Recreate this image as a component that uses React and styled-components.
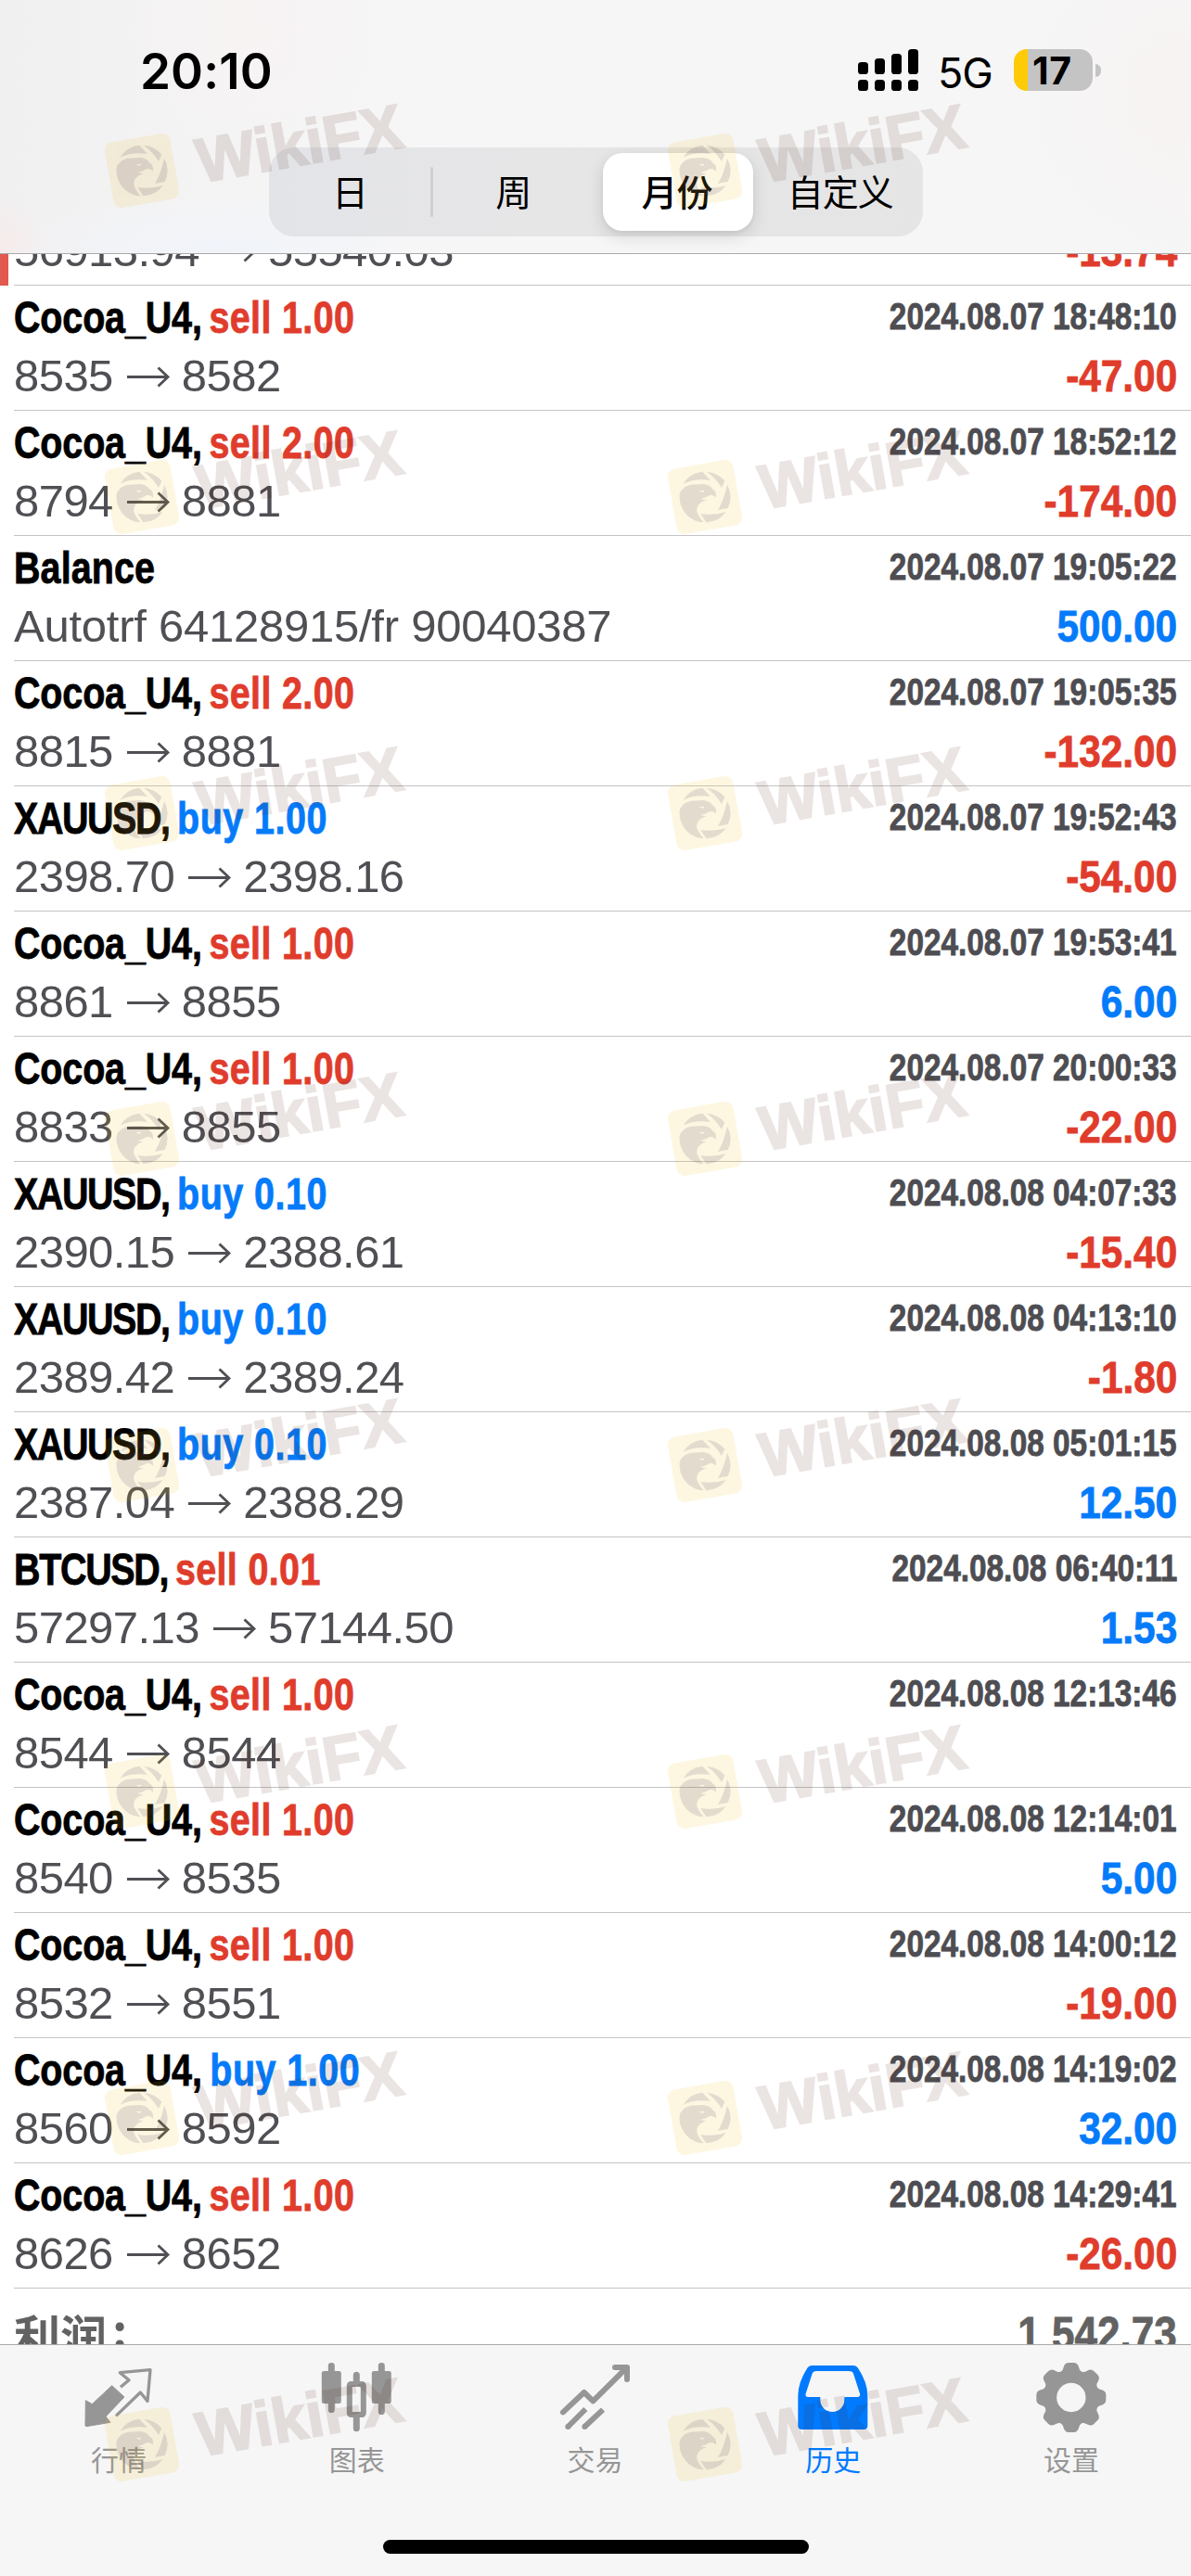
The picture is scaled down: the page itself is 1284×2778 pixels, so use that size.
import React from "react";
import styled, { createGlobalStyle } from "styled-components";

const GlobalStyle = createGlobalStyle`
  body { margin: 0; background: #fff; }
  * { box-sizing: border-box; }
`;

const RED = "#e03c2c";
const BLUE = "#057bfa";
const GREY = "#969696";

const sans = `"Liberation Sans", Arial, sans-serif`;
const cjk = `"Noto Sans CJK SC", sans-serif`;

const Screen = styled.main`
  position: relative;
  display: flex;
  flex-direction: column;
  width: 1284px;
  height: 2778px;
  overflow: hidden;
  background: #fff;
`;

const Header = styled.header`
  flex: none;
  height: 274px;
  display: flex;
  flex-direction: column;
  align-items: center;
  border-bottom: 1px solid #a9a9ab;
  background:
    radial-gradient(circle at 0px 262px, rgba(255, 228, 225, 0.4), transparent 50px),
    radial-gradient(ellipse at 230px 265px, rgba(240, 244, 251, 0.8), transparent 220px),
    radial-gradient(circle at 275px 30px, rgba(250, 243, 243, 0.7), transparent 140px),
    radial-gradient(circle at 1284px 100px, rgba(249, 240, 240, 0.6), transparent 180px),
    linear-gradient(90deg, #f1f0f1 0, #f6f6f7 400px, #f6f6f6 100%);
`;

const StatusBar = styled.div`
  width: 100%;
  height: 159px;
  padding: 53px 97px 0 151px;
  display: flex;
  justify-content: space-between;
  align-items: flex-start;
`;

const Clock = styled.div`
  font: 600 53px/48px Inter, sans-serif;
  letter-spacing: 0.1px;
  color: #000;
`;

const StatusRight = styled.div`
  display: flex;
  align-items: flex-start;
`;

const Network = styled.div`
  width: 80px;
  padding-left: 21px;
  margin-right: 23px;
  font: 400 45px/51px Inter, sans-serif;
  letter-spacing: -1px;
`;

const Battery = styled.div`
  width: 85px;
  height: 45px;
  border-radius: 14px;
  background: linear-gradient(90deg, #fecb06 15px, #c5c4c5 15px);
  padding-left: 20px;
  font: 700 41px/46px Inter, sans-serif;
  letter-spacing: 0.5px;
`;

const BatteryNub = styled.div`
  width: 6px;
  height: 14px;
  margin: 16px 0 0 3px;
  border-radius: 0 6px 6px 0;
  background: #c5c4c5;
`;

const Segmented = styled.nav`
  display: grid;
  grid-template-columns: repeat(4, 1fr);
  width: 705px;
  height: 96px;
  border-radius: 27px;
  background: linear-gradient(90deg, #e3e4e8, #e6e6e7 40%, #e5e5e6);
`;

const Segment = styled.div`
  display: flex;
  align-items: center;
  justify-content: center;
  margin: 6px 6px 6px 8px;
  padding: 0 3px 4px 0;
  border-radius: 21px;
  font: ${(p) => (p.$active ? 500 : 400)} 39px/50px ${cjk};
  letter-spacing: -1px;
  white-space: nowrap;
  color: #000;
  background: ${(p) => (p.$active ? "#fff" : "transparent")};
  box-shadow: ${(p) => (p.$active ? "0 6px 18px rgba(0,0,0,.13), 0 2px 4px rgba(0,0,0,.05)" : "none")};
`;

const SegmentCell = styled.div`
  display: grid;
  position: relative;
  &::after {
    content: "";
    display: ${(p) => (p.$divider ? "block" : "none")};
    position: absolute;
    right: -1px;
    top: 21px;
    width: 3px;
    height: 54px;
    border-radius: 2px;
    background: #cfcfd2;
  }
`;

const List = styled.section`
  flex: 1;
  min-height: 0;
  overflow: hidden;
  background: #fff;
`;

const Scroll = styled.div`
  margin-top: -101px;
`;

const Row = styled.article`
  height: 135px;
  padding-left: 15px;
  background: ${(p) =>
    p.$marked ? "linear-gradient(90deg, #e05a4e 9px, transparent 9px)" : "none"};
`;

const RowBody = styled.div`
  height: 135px;
  padding-right: 15px;
  border-bottom: 1px solid #c4c4c6;
`;

const Line = styled.div`
  display: flex;
  justify-content: space-between;
  height: ${(p) => p.$h}px;
  line-height: ${(p) => p.$h}px;
  white-space: pre;
`;

const Condensed = styled.div`
  font-family: ${sans};
  font-weight: 700;
  font-size: 48.4px;
  -webkit-text-stroke: 0.8px currentColor;
  transform-origin: ${(p) => p.$from || "right"} center;
`;

const Title = styled(Condensed)`
  display: flex;
  transform: scaleX(0.815);
`;

const Symbol = styled.span`
  color: #000;
  letter-spacing: ${(p) => p.$track}px;
`;

const Side = styled.span`
  margin-left: ${(p) => (p.$buy ? 10.5 : 9.5)}px;
  color: ${(p) => (p.$buy ? BLUE : RED)};
  letter-spacing: ${(p) => (p.$buy ? 0.6 : 0.45)}px;
`;

const Time = styled(Condensed)`
  font-size: 39.8px;
  line-height: 67px;
  color: #4d4d52;
  transform: scaleX(0.838);
`;

const Prices = styled.div`
  display: flex;
  align-items: center;
  font-family: ${sans};
  font-size: 49px;
  letter-spacing: ${(p) => (p.$note ? -0.25 : -0.55)}px;
  color: #4f4f54;
`;

const Profit = styled(Condensed)`
  color: ${(p) => (p.$loss ? RED : BLUE)};
  transform: scaleX(0.875);
`;

const ArrowSvg = styled.svg`
  flex: none;
  width: 48px;
  height: 24px;
  margin: 0 12px 0 14px;
`;

const Total = styled.div`
  display: flex;
  justify-content: space-between;
  padding: 12px 15px 0;
  color: #626262;
`;

const TotalLabel = styled.div`
  display: flex;
  font: 700 50px/74px ${cjk};
`;

const Colon = styled.span`
  margin: -7px 0 0 6px;
`;

const TotalValue = styled(Condensed)`
  font-size: 50px;
  line-height: 74px;
  transform: scaleX(0.88);
`;

const TabBar = styled.footer`
  flex: none;
  height: 250px;
  border-top: 1px solid #a9a9ab;
  background: #f6f6f6;
  display: flex;
  flex-direction: column;
  align-items: center;
`;

const Tabs = styled.div`
  display: grid;
  grid-template-columns: repeat(5, 1fr);
  width: 100%;
  height: 210px;
  padding-top: 17px;
`;

const Tab = styled.div`
  display: flex;
  flex-direction: column;
  align-items: center;
  gap: 3px;
  color: ${(p) => (p.$active ? "#007aff" : GREY)};
  font: 400 30px/44px ${cjk};
  svg { width: 80px; height: 80px; }
`;

const TabLabel = styled.span`
  padding-right: 1px;
`;

const HomeIndicator = styled.div`
  width: 459px;
  height: 15px;
  border-radius: 8px;
  background: #000;
`;

const Watermark = styled.div`
  position: absolute;
  left: ${(p) => p.$x - 36}px;
  top: ${(p) => p.$y - 36}px;
  display: flex;
  align-items: center;
  height: 72px;
  transform: rotate(-10deg);
  transform-origin: 36px 36px;
  pointer-events: none;
  svg { width: 72px; height: 72px; flex: none; }
`;

const WatermarkText = styled.span`
  margin: 2px 0 0 24px;
  font: 700 67.5px/74px ${sans};
  -webkit-text-stroke: 2px currentColor;
  color: rgb(80, 30, 15);
  opacity: 0.115;
`;

const Arrow = () => (
  <ArrowSvg viewBox="0 0 48 24" fill="none" stroke="currentColor" strokeWidth="2.8">
    <path d="M1 12.5H45M34.500 2.500L45 12.500L34.500 22.500" />
  </ArrowSvg>
);

const SignalIcon = () => (
  <svg width="65" height="45" viewBox="0 0 65 45" fill="#000">
    {[14, 10, 5, 0].map((top, i) => (
      <g key={i}>
        <rect x={i * 18} y={top} width="11" height={27 - top} rx="3.6" />
        <rect x={i * 18} y="33" width="11" height="12" rx="3.6" />
      </g>
    ))}
  </svg>
);

const QuotesIcon = () => (
  <svg viewBox="55 78 240 240">
    <path
      d="M68 206L89 218L153 158L193 195L133 258L148 277L70 290Q67 290 67 286Z"
      fill={GREY}
      stroke={GREY}
      strokeWidth="3"
      strokeLinejoin="round"
    />
    <path
      d="M181 163L208 140L179 116L277 107L268 208L245 180L166 256"
      fill="none"
      stroke={GREY}
      strokeWidth="10"
      strokeLinejoin="round"
    />
  </svg>
);

const ChartIcon = () => (
  <svg viewBox="825.6 78 240 240" fill={GREY}>
    <rect x="831" y="111" width="63" height="105" rx="7" />
    <rect x="852" y="84" width="21" height="162" rx="10" />
    <rect x="993" y="111" width="63" height="105" rx="7" />
    <rect x="1014" y="84" width="21" height="168" rx="10" />
    <path d="M933 148V124a10 10 0 0 1 21 0V148ZM933 258V296a10 10 0 0 0 21 0V258Z" />
    <rect x="921" y="153" width="45" height="99" rx="5" fill="none" stroke={GREY} strokeWidth="18" />
  </svg>
);

const TradeIcon = () => (
  <svg viewBox="66 78 240 240" fill="none" stroke={GREY} strokeWidth="18" strokeLinejoin="round">
    <path d="M81 244L149 180L178 208L286 101M249 99H288V138" strokeLinecap="round" />
    <path d="M97 291L154 234M151 291L210 236" />
    <circle cx="97" cy="291" r="9" fill={GREY} stroke="none" />
    <circle cx="151" cy="291" r="9" fill={GREY} stroke="none" />
  </svg>
);

const HistoryIcon = () => (
  <svg viewBox="836 78 240 240" fill="#007aff">
    <path
      fillRule="evenodd"
      d="M884 93H1020Q1029 93 1034 101Q1065 148 1065 190V287Q1065 300 1052 300H853Q840 300 840 287V190Q840 148 870 101Q875 93 884 93Z
      M899 111Q889 111 886 119L865 184Q862 195 873 195H912V204A39 39 0 0 0 990 204V195H1031Q1043 195 1040 184L1019 119Q1016 111 1006 111Z"
    />
  </svg>
);

const SettingsIcon = () => (
  <svg viewBox="107 78 240 240" fill={GREY}>
    <circle cx="223.500" cy="196.500" r="68.500" fill="none" stroke={GREY} strokeWidth="43" />
    {[0, 45, 90, 135, 180, 225, 270, 315].map((angle) => (
      <path
        key={angle}
        transform={`rotate(${angle} 223.500 196.500)`}
        d="M185 122L190 113Q197 109 199 98Q203 84 215 84H232Q244 84 248 98Q250 109 257 113L262 122Z"
      />
    ))}
  </svg>
);

const EagleBadge = () => (
  <svg viewBox="-108 -108 216 216">
    <rect x="-108" y="-108" width="216" height="216" rx="28" fill="rgb(240,190,20)" opacity="0.12" />
    <g transform="rotate(10)" fill="rgb(80,50,90)" opacity="0.14">
      <path d="M-70 -43A82 82 0 0 1 -8 -82L18 -54Q-30 -62 -70 -43Z" />
      <path d="M6 -82A82 82 0 0 1 64 -52L54 -30Q36 -60 6 -82Z" />
      <path d="M72 -40A82 82 0 0 1 74 36L42 42Q62 8 72 -40Z" />
      <path d="M68 48A82 82 0 0 1 4 82L-14 54Q30 60 68 48Z" />
      <path
        fillRule="evenodd"
        d="M-82 -8Q-76 -34 -46 -40L-4 -42Q18 -38 24 -26Q38 -20 36 2Q28 -8 14 -5Q6 2 -14 6Q-2 10 8 8Q-12 14 -22 26Q-32 44 -20 60Q-14 72 -4 82A82 82 0 0 1 -82 -8ZM-20 -20L-6 -15L-2 -22Z"
      />
    </g>
  </svg>
);

const deals = [
  { symbol: "BTCUSD,", side: "sell", volume: "0.01", time: "2024.08.07 18:40:02", open: "56913.94", close: "55540.03", profit: "-13.74", marked: true },
  { symbol: "Cocoa_U4,", side: "sell", volume: "1.00", time: "2024.08.07 18:48:10", open: "8535", close: "8582", profit: "-47.00" },
  { symbol: "Cocoa_U4,", side: "sell", volume: "2.00", time: "2024.08.07 18:52:12", open: "8794", close: "8881", profit: "-174.00" },
  { symbol: "Balance", time: "2024.08.07 19:05:22", note: "Autotrf 64128915/fr 90040387", profit: "500.00" },
  { symbol: "Cocoa_U4,", side: "sell", volume: "2.00", time: "2024.08.07 19:05:35", open: "8815", close: "8881", profit: "-132.00" },
  { symbol: "XAUUSD,", side: "buy", volume: "1.00", time: "2024.08.07 19:52:43", open: "2398.70", close: "2398.16", profit: "-54.00" },
  { symbol: "Cocoa_U4,", side: "sell", volume: "1.00", time: "2024.08.07 19:53:41", open: "8861", close: "8855", profit: "6.00" },
  { symbol: "Cocoa_U4,", side: "sell", volume: "1.00", time: "2024.08.07 20:00:33", open: "8833", close: "8855", profit: "-22.00" },
  { symbol: "XAUUSD,", side: "buy", volume: "0.10", time: "2024.08.08 04:07:33", open: "2390.15", close: "2388.61", profit: "-15.40" },
  { symbol: "XAUUSD,", side: "buy", volume: "0.10", time: "2024.08.08 04:13:10", open: "2389.42", close: "2389.24", profit: "-1.80" },
  { symbol: "XAUUSD,", side: "buy", volume: "0.10", time: "2024.08.08 05:01:15", open: "2387.04", close: "2388.29", profit: "12.50" },
  { symbol: "BTCUSD,", side: "sell", volume: "0.01", time: "2024.08.08 06:40:11", open: "57297.13", close: "57144.50", profit: "1.53" },
  { symbol: "Cocoa_U4,", side: "sell", volume: "1.00", time: "2024.08.08 12:13:46", open: "8544", close: "8544", profit: "" },
  { symbol: "Cocoa_U4,", side: "sell", volume: "1.00", time: "2024.08.08 12:14:01", open: "8540", close: "8535", profit: "5.00" },
  { symbol: "Cocoa_U4,", side: "sell", volume: "1.00", time: "2024.08.08 14:00:12", open: "8532", close: "8551", profit: "-19.00" },
  { symbol: "Cocoa_U4,", side: "buy", volume: "1.00", time: "2024.08.08 14:19:02", open: "8560", close: "8592", profit: "32.00" },
  { symbol: "Cocoa_U4,", side: "sell", volume: "1.00", time: "2024.08.08 14:29:41", open: "8626", close: "8652", profit: "-26.00" },
];

const tracking = { "Cocoa_U4,": -0.15, "XAUUSD,": -1.75, "BTCUSD,": -1.6, Balance: 0.15 };

const tabs = [
  { label: "行情", Icon: QuotesIcon },
  { label: "图表", Icon: ChartIcon },
  { label: "交易", Icon: TradeIcon },
  { label: "历史", Icon: HistoryIcon, active: true },
  { label: "设置", Icon: SettingsIcon },
];

const periods = ["日", "周", "月份", "自定义"];
const watermarkRows = [184, 536, 877, 1228, 1580, 1932, 2284, 2636];
const watermarkColumns = [152.5, 759.5];

const Deal = ({ deal }) => (
  <Row $marked={deal.marked}>
    <RowBody>
      <Line $h={69}>
        <Title $from="left">
          <Symbol $track={tracking[deal.symbol]}>{deal.symbol}</Symbol>
          {deal.side && (
            <Side $buy={deal.side === "buy"}>
              {deal.side} {deal.volume}
            </Side>
          )}
        </Title>
        <Time>{deal.time}</Time>
      </Line>
      <Line $h={57}>
        <Prices $note={Boolean(deal.note)}>
          {deal.note || (
            <>
              <span>{deal.open}</span>
              <Arrow />
              <span>{deal.close}</span>
            </>
          )}
        </Prices>
        <Profit $loss={deal.profit.startsWith("-")}>{deal.profit}</Profit>
      </Line>
    </RowBody>
  </Row>
);

export default function App() {
  return (
    <>
      <GlobalStyle />
      <Screen>
        <Header>
          <StatusBar>
            <Clock>20:10</Clock>
            <StatusRight>
              <SignalIcon />
              <Network>5G</Network>
              <Battery>17</Battery>
              <BatteryNub />
            </StatusRight>
          </StatusBar>
          <Segmented>
            {periods.map((period, i) => (
              <SegmentCell key={period} $divider={i === 0}>
                <Segment $active={i === 2}>{period}</Segment>
              </SegmentCell>
            ))}
          </Segmented>
        </Header>
        <List>
          <Scroll>
            {deals.map((deal, i) => (
              <Deal key={i} deal={deal} />
            ))}
            <Total>
              <TotalLabel>
                利润<Colon>:</Colon>
              </TotalLabel>
              <TotalValue>1 542.73</TotalValue>
            </Total>
          </Scroll>
        </List>
        <TabBar>
          <Tabs>
            {tabs.map(({ label, Icon, active }) => (
              <Tab key={label} $active={active}>
                <Icon />
                <TabLabel>{label}</TabLabel>
              </Tab>
            ))}
          </Tabs>
          <HomeIndicator />
        </TabBar>
        {watermarkRows.map((y) =>
          watermarkColumns.map((x) => (
            <Watermark key={`${x}-${y}`} $x={x} $y={y}>
              <EagleBadge />
              <WatermarkText>WikiFX</WatermarkText>
            </Watermark>
          ))
        )}
      </Screen>
    </>
  );
}
